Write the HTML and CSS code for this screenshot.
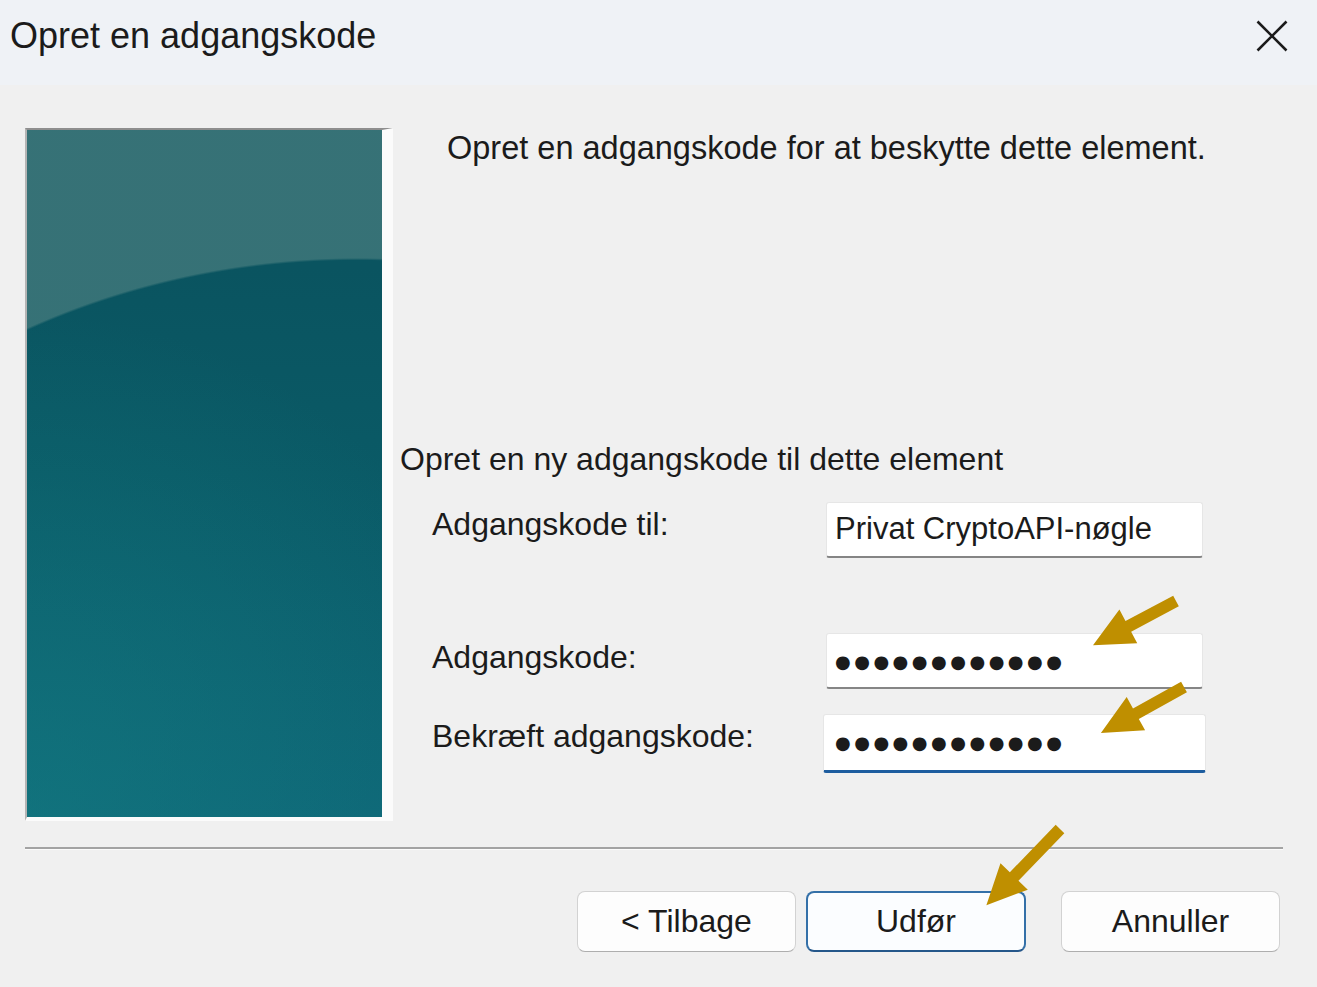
FILE: index.html
```html
<!DOCTYPE html>
<html lang="da">
<head>
    <meta charset="UTF-8">
    <meta name="viewport" content="width=device-width, initial-scale=1.0">
    <title>Opret en adgangskode</title>
    <link rel="stylesheet" href="styles.css">
</head>
<body>
    <div class="titlebar">
        <span class="title">Opret en adgangskode</span>
        <svg class="close" width="32" height="32" viewBox="0 0 32 32">
            <path d="M1.5 1.5 L30.5 30.5 M30.5 1.5 L1.5 30.5" stroke="#1b1b1b" stroke-width="2.6" fill="none"/>
        </svg>
    </div>

    <div class="dialog">
        <div class="main">
            <div class="banner-frame">
                <div class="banner"></div>
            </div>
            <div class="content">
                <p class="intro">Opret en adgangskode for at beskytte dette element.</p>
                <p class="subhead">Opret en ny adgangskode til dette element</p>
                <div class="fields">
                    <label class="field-label">Adgangskode til:</label>
                    <div class="field">Privat CryptoAPI-nøgle</div>

                    <label class="field-label row2">Adgangskode:</label>
                    <div class="field row2 dots">●●●●●●●●●●●●</div>

                    <label class="field-label">Bekræft adgangskode:</label>
                    <div class="field focused dots">●●●●●●●●●●●●</div>
                </div>
            </div>
        </div>

        <div class="separator"></div>

        <div class="buttons">
            <button type="button" class="btn">&lt; Tilbage</button>
            <button type="button" class="btn primary">Udfør</button>
            <button type="button" class="btn cancel">Annuller</button>
        </div>
    </div>

    <svg class="arrows" width="1317" height="987" viewBox="0 0 1317 987">
        <g fill="#bf8f00">
            <polygon transform="translate(1176 601) rotate(152)" points="0,-6 54,-6 54,-19 94,0 54,19 54,6 0,6"/>
            <polygon transform="translate(1184 687) rotate(151)" points="0,-6 55,-6 55,-19 95,0 55,19 55,6 0,6"/>
            <polygon transform="translate(1060 829) rotate(134)" points="0,-6 66,-6 66,-19 106,0 66,19 66,6 0,6"/>
        </g>
    </svg>
</body>
</html>
```

FILE: styles.css
```css
* {
    box-sizing: border-box;
}
body {
    margin: 0;
    width: 1317px;
    height: 987px;
    position: relative;
    overflow: hidden;
    font-family: "Liberation Sans", Arial, sans-serif;
    color: #1b1b1b;
    background-color: #f0f0f0;
}
.titlebar {
    height: 85px;
    padding: 0 29px 13px 10px;
    display: flex;
    justify-content: space-between;
    align-items: center;
    background-color: #eff2f6;
}
.title {
    font-size: 36px;
    line-height: 44px;
}
.close {
    display: block;
}
.main {
    display: flex;
    padding: 43px 0 0 25px;
}
.banner-frame {
    border-top: 2px solid #8e8e8e;
    border-left: 2px solid #b4b4b4;
    border-right: 11px solid #fbfbfb;
    border-bottom: 4px solid #fbfbfb;
}
.banner {
    width: 355px;
    height: 687px;
    background:
        radial-gradient(ellipse 700px 593px at 330px 721px, rgba(58,116,120,0) 99.6%, rgba(58,116,120,0.92) 100%),
        radial-gradient(circle at 0% 100%, rgba(20,125,130,0.55), rgba(20,125,130,0) 65%),
        linear-gradient(to bottom, #0a5460 0%, #0a5460 20%, #0a5a66 50%, #0e6677 100%);
}
.content {
    flex: 1;
    padding-left: 7px;
}
.intro {
    margin: 0 0 0 47px;
    font-size: 32.5px;
    line-height: 40px;
}
.subhead {
    margin: 271px 0 0 0;
    font-size: 32px;
    line-height: 40px;
}
.fields {
    margin-top: 23px;
    display: grid;
    grid-template-columns: 426px 377px;
    row-gap: 25px;
    align-items: start;
}
.field-label {
    padding-left: 32px;
    margin-top: 2px;
    font-size: 32px;
    line-height: 40px;
}
.field-label.row2 {
    margin-top: 54px;
}
.field {
    height: 56px;
    padding-left: 8px;
    background-color: #fff;
    border: 1px solid #e6e6e6;
    border-bottom: 2px solid #858585;
    border-radius: 3px;
    font-size: 31px;
    line-height: 52px;
}
.field.row2 {
    margin-top: 50px;
}
.dots {
    font-family: "DejaVu Sans", sans-serif;
    font-size: 18px;
    letter-spacing: 3.5px;
    line-height: 56px;
}
.field.focused {
    margin-left: -3px;
    width: 383px;
    height: 59px;
    padding-left: 11px;
    border-bottom: 3px solid #1d5d9f;
}
.separator {
    margin: 26px 34px 0 25px;
    height: 3px;
    background-color: #a3a3a3;
    border-bottom: 1px solid #fbfbfb;
}
.buttons {
    display: flex;
    justify-content: flex-end;
    padding: 41px 37px 0 0;
}
.btn {
    width: 219px;
    height: 61px;
    margin-left: 10px;
    padding: 0;
    font-family: "Liberation Sans", Arial, sans-serif;
    font-size: 32px;
    color: #1b1b1b;
    background-color: #fdfdfd;
    border: 1px solid #d2d2d2;
    border-bottom-color: #aeaeae;
    border-radius: 8px;
}
.btn.primary {
    width: 220px;
    background-color: #fbfdff;
    border: 2px solid #3470a8;
    border-bottom-color: #25578a;
}
.btn.cancel {
    margin-left: 35px;
}
.arrows {
    position: absolute;
    left: 0;
    top: 0;
    pointer-events: none;
}
```
